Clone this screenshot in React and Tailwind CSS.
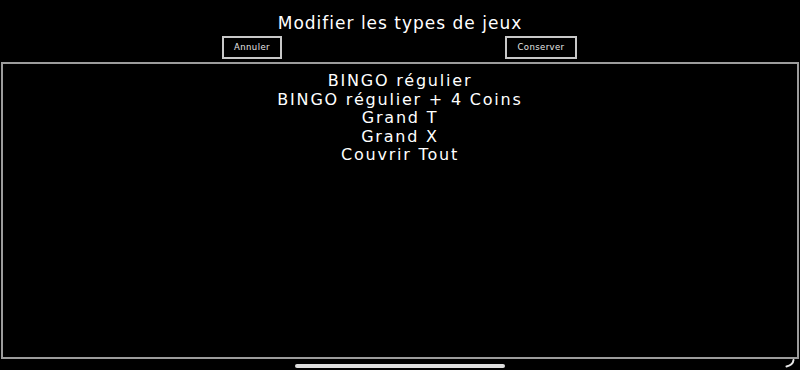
import React from "react";

const gameTypes = [
  "BINGO régulier",
  "BINGO régulier + 4 Coins",
  "Grand T",
  "Grand X",
  "Couvrir Tout",
];

export default function App() {
  return (
    <div
      className="relative flex h-[370px] w-[800px] flex-col overflow-hidden bg-black text-white"
      style={{ fontFamily: '"DejaVu Sans", "Liberation Sans", sans-serif' }}
    >
      <h1 className="mt-[13px] text-center text-[17px] leading-[20px] tracking-[1px]">
        Modifier les types de jeux
      </h1>
      <div className="mt-[3px] flex h-[23px] pl-[222px] gap-[223px]">
        <button className="h-[23px] w-[60px] border-2 border-[#c8c8c8] text-[8.5px] tracking-[0.4px] text-[#e6e6e6]">
          Annuler
        </button>
        <button className="h-[23px] w-[72px] border-2 border-[#c8c8c8] text-[8.5px] tracking-[0.4px] text-[#e6e6e6]">
          Conserver
        </button>
      </div>
      <div className="mx-[1px] mt-[3px] h-[297px] border-2 border-[#9c9c9c] pt-[8px]">
        <ul className="flex flex-col items-center">
          {gameTypes.map((t) => (
            <li key={t} className="text-[16px] leading-[18.5px] tracking-[1.8px]">
              {t}
            </li>
          ))}
        </ul>
      </div>
      <div className="mx-auto mt-[5px] h-[4px] w-[210px] rounded-full bg-[#dedede]" />
      <svg
        className="absolute right-[5px] bottom-[2px]"
        width="10"
        height="9"
        viewBox="0 0 10 9"
      >
        <path
          d="M8.5 1 Q8 6 1.5 7.5"
          stroke="#e8e8e8"
          strokeWidth="2"
          fill="none"
          strokeLinecap="round"
        />
      </svg>
    </div>
  );
}
